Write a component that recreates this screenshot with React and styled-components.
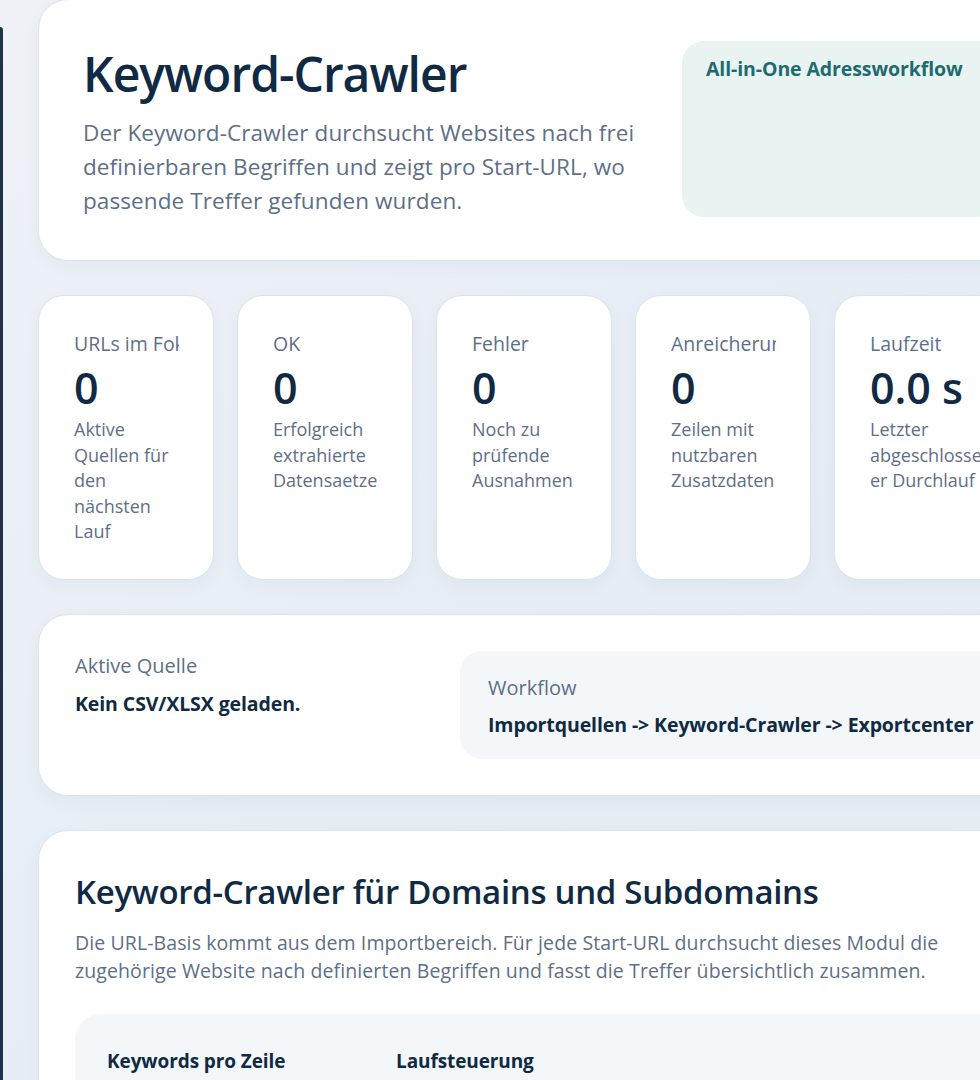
import React from "react";
import styled, { createGlobalStyle } from "styled-components";

const GlobalStyle = createGlobalStyle`
  html, body {
    margin: 0;
    padding: 0;
    overflow: hidden;
  }
  body {
    font-family: "Open Sans", "Noto Sans", sans-serif;
    background: linear-gradient(135deg, #eef2f7 0%, #e5ecf4 60%, #e8eef5 100%);
    color: #102a43;
    min-height: 1080px;
  }
  * { box-sizing: border-box; }
`;

const Shell = styled.div`
  display: flex;
  align-items: flex-start;
  min-height: 1080px;
`;

const Sidebar = styled.aside`
  flex: 0 0 3px;
  align-self: stretch;
  margin-top: 27px;
  background: #1f3248;
  border-top-right-radius: 3px;
`;

const Main = styled.main`
  flex: 0 0 auto;
  width: 1206px;
  padding: 0 0 40px 35px;
  display: flex;
  flex-direction: column;
  gap: 34px;
`;

const Card = styled.section`
  background: #ffffff;
  border: 1px solid #dbe3ec;
  border-radius: 30px;
  box-shadow: 0 6px 18px rgba(16, 42, 67, 0.04);
`;

const Hero = styled(Card)`
  display: grid;
  grid-template-columns: minmax(0, 1fr) 482px;
  gap: 44px;
  padding: 41px 44px 42px 44px;
  margin-top: -1px;
`;

const HeroTitle = styled.h1`
  margin: 6px 0 0;
  font-size: 48px;
  line-height: 54px;
  font-weight: 600;
  letter-spacing: -1px;
  color: #102a43;
`;

const HeroText = styled.p`
  margin: 15px 0 0;
  max-width: 580px;
  font-size: 22.5px;
  line-height: 34px;
  color: #5d6f87;
  letter-spacing: 0.1px;
`;

const AsideBox = styled.div`
  background: #e8f3f2;
  border-radius: 22px;
  padding: 14px 24px;
  height: 176px;
`;

const AsideTitle = styled.div`
  font-size: 19.5px;
  font-weight: 700;
  color: #1e6b70;
  line-height: 28px;
  letter-spacing: -0.1px;
`;

const StatGrid = styled.div`
  display: grid;
  grid-template-columns: repeat(6, 176px);
  gap: 23px;
`;

const StatCard = styled(Card)`
  border-radius: 26px;
  padding: 34px 34px 34px 35px;
  min-width: 0;
`;

const StatLabel = styled.div`
  font-size: 19.5px;
  line-height: 28px;
  color: #5d6f87;
  white-space: nowrap;
  overflow: hidden;
`;

const StatValue = styled.div`
  margin-top: 6px;
  font-size: 43px;
  line-height: 48px;
  font-weight: 600;
  color: #102a43;
`;

const StatNote = styled.div`
  margin-top: 5px;
  font-size: 18px;
  line-height: 25.5px;
  color: #5d6f87;
`;

const SourceCard = styled(Card)`
  display: grid;
  grid-template-columns: 349px minmax(0, 1fr);
  gap: 36px;
  padding: 36px;
`;

const InfoBlock = styled.div`
  padding: ${(p) => (p.$boxed ? "24px 28px 21px" : "2px 0 0")};
  background: ${(p) => (p.$boxed ? "#f4f7fa" : "transparent")};
  border-radius: 22px;
  min-height: ${(p) => (p.$boxed ? "108px" : "0")};
`;

const InfoLabel = styled.div`
  font-size: 20px;
  line-height: 26px;
  color: #5d6f87;
`;

const InfoValue = styled.div`
  margin-top: ${(p) => (p.$gap ? `${p.$gap}px` : "10px")};
  font-size: 19.5px;
  line-height: 26px;
  font-weight: 700;
  color: #102a43;
  white-space: nowrap;
  letter-spacing: -0.1px;
`;

const Section = styled(Card)`
  padding: 40px 36px 36px;
`;

const SectionTitle = styled.h2`
  margin: 0;
  font-size: 33px;
  line-height: 42px;
  font-weight: 600;
  letter-spacing: -0.3px;
  color: #102a43;
`;

const SectionText = styled.p`
  margin: 16px 0 0;
  max-width: 890px;
  font-size: 19.5px;
  line-height: 28px;
  color: #5d6f87;
  letter-spacing: 0.1px;
`;

const Panel = styled.div`
  margin-top: 29px;
  background: #f4f7fa;
  border-radius: 26px;
  padding: 34px 32px;
  display: grid;
  grid-template-columns: 289px 1fr;
  min-height: 200px;
`;

const PanelHeading = styled.div`
  font-size: 19px;
  line-height: 26px;
  font-weight: 700;
  color: #102a43;
  letter-spacing: -0.1px;
`;

const stats = [
  { label: "URLs im Fokus", value: "0", note: "Aktive Quellen für den nächsten Lauf" },
  { label: "OK", value: "0", note: "Erfolgreich extrahierte Datensaetze" },
  { label: "Fehler", value: "0", note: "Noch zu prüfende Ausnahmen" },
  { label: "Anreicherung", value: "0", note: "Zeilen mit nutzbaren Zusatzdaten" },
  {
    label: "Laufzeit",
    value: "0.0 s",
    note: (
      <>
        Letzter abgeschlossen<wbr />er Durchlauf
      </>
    ),
  },
  { label: "Treffer", value: "0", note: "Gefundene Keyword-Stellen" },
];

export default function App() {
  return (
    <>
      <GlobalStyle />
      <Shell>
        <Sidebar />
        <Main>
          <Hero>
            <div>
              <HeroTitle>Keyword-Crawler</HeroTitle>
              <HeroText>
                Der Keyword-Crawler durchsucht Websites nach frei definierbaren
                Begriffen und zeigt pro Start-URL, wo passende Treffer gefunden
                wurden.
              </HeroText>
            </div>
            <AsideBox>
              <AsideTitle>All-in-One Adressworkflow</AsideTitle>
            </AsideBox>
          </Hero>

          <StatGrid>
            {stats.map((s) => (
              <StatCard key={s.label}>
                <StatLabel>{s.label}</StatLabel>
                <StatValue>{s.value}</StatValue>
                <StatNote>{s.note}</StatNote>
              </StatCard>
            ))}
          </StatGrid>

          <SourceCard>
            <InfoBlock>
              <InfoLabel>Aktive Quelle</InfoLabel>
              <InfoValue $gap={12}>Kein CSV/XLSX geladen.</InfoValue>
            </InfoBlock>
            <InfoBlock $boxed>
              <InfoLabel>Workflow</InfoLabel>
              <InfoValue $gap={11}>
                Importquellen -&gt; Keyword-Crawler -&gt; Exportcenter
              </InfoValue>
            </InfoBlock>
          </SourceCard>

          <Section>
            <SectionTitle>Keyword-Crawler für Domains und Subdomains</SectionTitle>
            <SectionText>
              Die URL-Basis kommt aus dem Importbereich. Für jede Start-URL
              durchsucht dieses Modul die zugehörige Website nach definierten
              Begriffen und fasst die Treffer übersichtlich zusammen.
            </SectionText>
            <Panel>
              <PanelHeading>Keywords pro Zeile</PanelHeading>
              <PanelHeading>Laufsteuerung</PanelHeading>
            </Panel>
          </Section>
        </Main>
      </Shell>
    </>
  );
}
